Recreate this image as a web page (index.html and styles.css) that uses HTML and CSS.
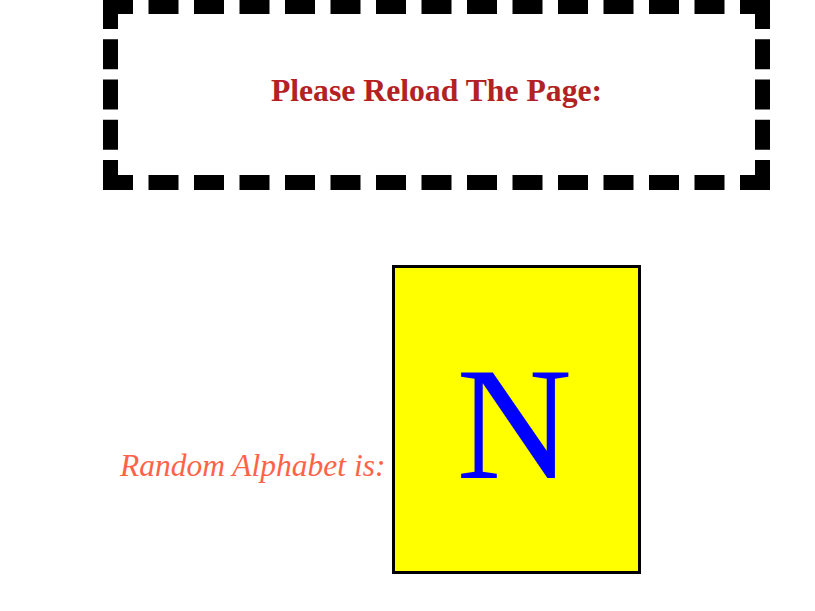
FILE: index.html
```html
<!DOCTYPE html>
<html>
<head>
<meta charset="utf-8">
<link rel="stylesheet" href="styles.css">
</head>
<body>
<div class="reload-box">
  <h1 class="reload-title">Please Reload The Page:</h1>
</div>
<div class="alpha-row"><span class="alpha-label">Random Alphabet is:</span><span class="alpha-card">N</span></div>
</body>
</html>
```

FILE: styles.css
```css
html, body {
  margin: 0;
  padding: 0;
  background: #fff;
  font-family: "Liberation Serif", "Times New Roman", serif;
}
.reload-box {
  box-sizing: border-box;
  margin: -1px 0 0 103px;
  width: 667px;
  height: 191px;
  border: 15px dashed #000;
  padding-top: 59px;
  text-align: center;
}
.reload-title {
  margin: 0;
  font-size: 31.7px;
  font-weight: bold;
  color: #b22222;
}
.alpha-row {
  margin: 75px 0 0 120px;
  font-size: 32px;
  white-space: nowrap;
}
.alpha-label {
  font-size: 31.5px;
  font-style: italic;
  color: #ff6347;
  margin-right: 7px;
  vertical-align: 2px;
}
.alpha-card {
  display: inline-block;
  border: 3px solid #000;
  background: #ffff00;
  color: #0000ff;
  font-size: 160px;
  line-height: normal;
  padding: 64px 66px 54px 61px;
}
```
